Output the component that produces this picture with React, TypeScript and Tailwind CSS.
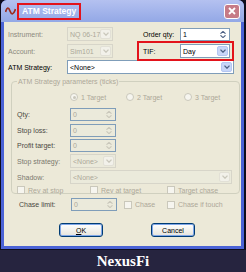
import React from 'react'

const font = { fontFamily: '"Liberation Sans", Arial, sans-serif' }

const Arrow = ({ disabled }: { disabled?: boolean }) => (
  <div
    className={`w-[11px] h-full flex items-center justify-center rounded-[2px] ${
      disabled ? 'bg-[#f2f1ea] border border-[#e2e0d6]' : 'bg-[#c8d6f8] border border-[#b4c6f2]'
    }`}
  >
    <svg width="6" height="4" viewBox="0 0 6 4">
      <path d="M0.5 0.6 L3 3.2 L5.5 0.6" fill="none" stroke={disabled ? '#c9c7bb' : '#4d6185'} strokeWidth="1.3" />
    </svg>
  </div>
)

const Select = ({ value, disabled, w }: { value: string; disabled?: boolean; w: string }) => (
  <div
    className={`${w} h-[14px] flex items-center justify-between border pl-[2px] pr-px py-px whitespace-nowrap ${
      disabled ? 'bg-[#ebeadb] border-[#d7d5c9] text-[#aca899]' : 'bg-white border-[#7f9db9] text-black'
    }`}
  >
    <span className="leading-none">{value}</span>
    <Arrow disabled={disabled} />
  </div>
)

const Spin = ({ value, disabled, w }: { value: string; disabled?: boolean; w: string }) => (
  <div
    className={`${w} h-[13px] flex items-center justify-between border border-[#7f9db9] pl-[2px] pr-px py-px ${
      disabled ? 'bg-[#ebeadb] text-[#aca899]' : 'bg-white text-black'
    }`}
  >
    <span className="leading-none">{value}</span>
    <div className="w-[10px] h-full flex flex-col items-center justify-center gap-[1px]">
      <svg width="6" height="3" viewBox="0 0 6 3">
        <path d="M0.5 2.7 L3 0.4 L5.5 2.7" fill="none" stroke={disabled ? '#c9c7bb' : '#4d6185'} strokeWidth="1.1" />
      </svg>
      <svg width="6" height="3" viewBox="0 0 6 3">
        <path d="M0.5 0.3 L3 2.6 L5.5 0.3" fill="none" stroke={disabled ? '#c9c7bb' : '#4d6185'} strokeWidth="1.1" />
      </svg>
    </div>
  </div>
)

const Check = ({ label }: { label: string }) => (
  <div className="flex items-center gap-[3px] text-[#aca899] whitespace-nowrap">
    <div className="w-[8px] h-[8px] border border-[#cac8bb] bg-[#f6f5ef]" />
    <span className="leading-none">{label}</span>
  </div>
)

const Radio = ({ label, checked }: { label: string; checked?: boolean }) => (
  <div className="flex items-center gap-[3px] text-[#aca899] whitespace-nowrap">
    <div className="w-[8px] h-[8px] rounded-full border border-[#cac8bb] bg-[#f6f5ef] flex items-center justify-center">
      {checked && <div className="w-[3px] h-[3px] rounded-full bg-[#c9c7bb]" />}
    </div>
    <span className="leading-none">{label}</span>
  </div>
)

const Label = ({ children, color = 'text-black', w = 'w-[59px]' }: { children: React.ReactNode; color?: string; w?: string }) => (
  <div className={`${w} shrink-0 leading-none whitespace-nowrap ${color}`}>{children}</div>
)

export default function App() {
  return (
    <div className="w-[246px] h-[272px] bg-[#26243f] flex flex-col text-[7px]" style={font}>
      <div className="h-[250px] bg-[#0d0c1c] pl-px pr-[2px] pb-px">
        <div className="h-full flex flex-col bg-[#4b63d6] px-[3px] pb-[3px] rounded-t-[6px]">
          {/* title bar */}
          <div className="h-[22px] -mx-[3px] px-[4px] flex items-center justify-between rounded-t-[6px] bg-gradient-to-b from-[#b4c1f0] to-[#93a8e6]">
            <div className="flex items-center gap-[1px]">
              <svg width="11" height="10" viewBox="0 0 11 10">
                <path d="M0.5 6 C2 1, 3.5 1, 5 5 S 8.5 9, 10.5 3" fill="none" stroke="#9b2b1e" strokeWidth="1.8" />
              </svg>
              <div className="border-2 border-[#e3131b] px-[3px] h-[17px] flex items-center">
                <span className="text-white font-bold text-[8.5px] leading-none whitespace-nowrap">ATM Strategy</span>
              </div>
            </div>
            <div className="w-[16px] h-[15px] rounded-[3px] border border-white bg-[#c67a86] flex items-center justify-center">
              <svg width="8" height="8" viewBox="0 0 8 8">
                <path d="M1 1 L7 7 M7 1 L1 7" stroke="white" strokeWidth="1.8" />
              </svg>
            </div>
          </div>

          {/* client area */}
          <div className="relative flex-1 bg-[#ece9d8] pl-[4px] flex flex-col">
            <div className="absolute left-[133px] top-[19px] w-[97px] h-[20px] border-2 border-[#e3131b]" />

            <div className="mt-[5px] flex items-center h-[14px]">
              <Label color="text-[#8d8a7e]">Instrument:</Label>
              <Select value="NQ 06-17" disabled w="w-[46px]" />
              <div className="w-[30px]" />
              <Label w="w-[37px]">Order qty:</Label>
              <Spin value="1" w="w-[50px]" />
            </div>
            <div className="mt-[3px] flex items-center h-[14px]">
              <Label color="text-[#8d8a7e]">Account:</Label>
              <Select value="Sim101" disabled w="w-[46px]" />
              <div className="w-[30px]" />
              <Label w="w-[37px]">TIF:</Label>
              <Select value="Day" w="w-[50px]" />
            </div>
            <div className="mt-[2px] flex items-center h-[14px]">
              <Label>ATM Strategy:</Label>
              <Select value="<None>" w="w-[167px]" />
            </div>

            {/* group box */}
            <div className="relative mt-[7px] ml-[3px] w-[229px] h-[113px] border border-[#d0d0bf] rounded-[4px] pl-[5px] flex flex-col">
              <div className="absolute -top-[4px] left-[5px] bg-[#ece9d8] px-[1px] text-[#aca899] leading-none whitespace-nowrap">
                ATM Strategy parameters (ticks)
              </div>
              <div className="mt-[11px] flex items-center h-[10px]">
                <div className="w-[53px]" />
                <div className="w-[56px]"><Radio label="1 Target" checked /></div>
                <div className="w-[58px]"><Radio label="2 Target" /></div>
                <Radio label="3 Target" />
              </div>
              <div className="mt-[7px] flex items-center h-[13px]">
                <Label w="w-[53px]" color="text-[#4a4842]">Qty:</Label>
                <Spin value="0" disabled w="w-[46px]" />
              </div>
              <div className="mt-[3px] flex items-center h-[13px]">
                <Label w="w-[53px]" color="text-[#4a4842]">Stop loss:</Label>
                <Spin value="0" disabled w="w-[46px]" />
              </div>
              <div className="mt-[2px] flex items-center h-[13px]">
                <Label w="w-[53px]" color="text-[#4a4842]">Profit target:</Label>
                <Spin value="0" disabled w="w-[46px]" />
              </div>
              <div className="mt-[2px] flex items-center h-[14px]">
                <Label w="w-[53px]" color="text-[#7a786e]">Stop strategy:</Label>
                <Select value="<None>" disabled w="w-[46px]" />
              </div>
              <div className="mt-[2px] flex items-center h-[14px]">
                <Label w="w-[53px]" color="text-[#7a786e]">Shadow:</Label>
                <Select value="<None>" disabled w="w-[162px]" />
              </div>
              <div className="mt-[2px] flex items-center h-[12px]">
                <div className="w-[73px]"><Check label="Rev at stop" /></div>
                <div className="w-[77px]"><Check label="Rev at target" /></div>
                <Check label="Target chase" />
              </div>
            </div>

            <div className="mt-[4px] flex items-center h-[13px] pl-[11px]">
              <Label w="w-[52px]" color="text-[#4a4842]">Chase limit:</Label>
              <Spin value="0" disabled w="w-[46px]" />
              <div className="w-[7px]" />
              <div className="w-[43px]"><Check label="Chase" /></div>
              <Check label="Chase if touch" />
            </div>

            <div className="mt-[12px] flex h-[14px]">
              <div className="w-[51px]" />
              <div className="w-[44px] h-[14px] rounded-[3px] border border-[#003c74] bg-gradient-to-b from-white to-[#e6e4dc] shadow-[inset_0_0_0_1px_#7fa6e8] flex items-center justify-center leading-none">
                <span><span className="underline">O</span>K</span>
              </div>
              <div className="w-[48px]" />
              <div className="w-[44px] h-[14px] rounded-[3px] border border-[#003c74] bg-gradient-to-b from-white to-[#e6e4dc] shadow-[inset_0_0_0_1px_#7fa6e8] flex items-center justify-center leading-none">
                Cancel
              </div>
            </div>
          </div>
        </div>
      </div>
      <div className="flex-1 flex items-center justify-center">
        <span className="text-white font-bold text-[15px] leading-none" style={{ fontFamily: '"Liberation Serif", "Times New Roman", serif' }}>
          NexusFi
        </span>
      </div>
    </div>
  )
}
